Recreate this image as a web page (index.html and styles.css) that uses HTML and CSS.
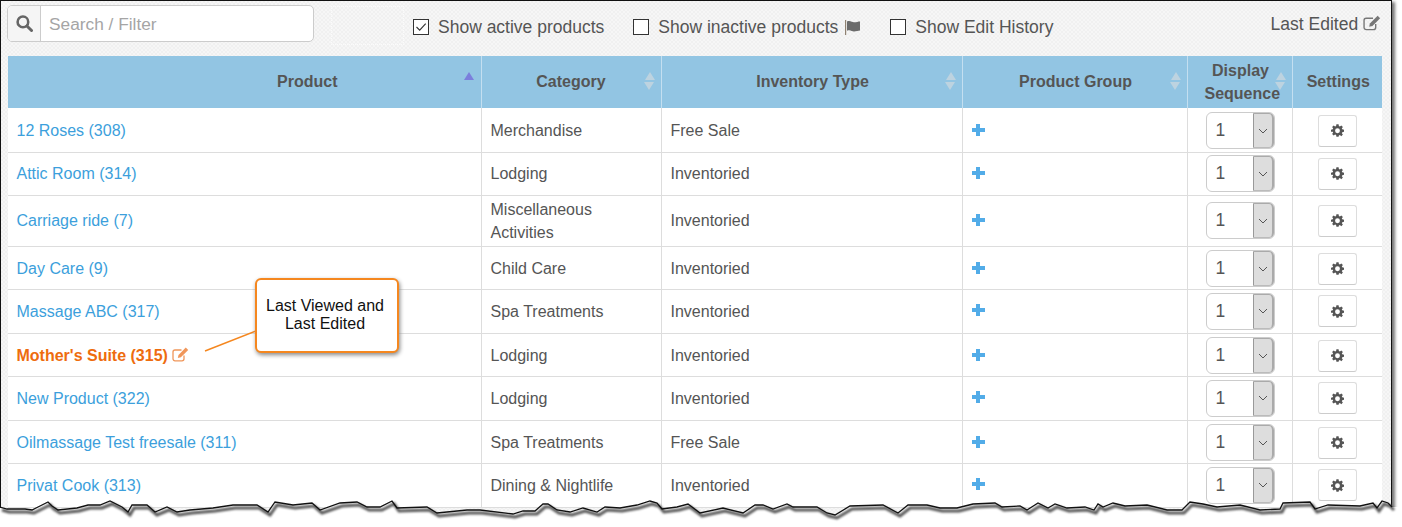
FILE: index.html
```html
<!DOCTYPE html>
<html lang="en">
<head>
	<meta charset="UTF-8">
	<title>Products</title>
	<link rel="stylesheet" href="styles.css">
</head>
<body>
<svg width="0" height="0" class="defs">
	<symbol id="gear" viewBox="0 0 24 24"><path fill-rule="evenodd" d="M10 1h4l.6 3.200 1.800.8L19.100 3.100l2.800 2.800-1.900 2.700.8 1.800L24 11v4l-3.200.6-.8 1.800 1.900 2.700-2.800 2.800-2.700-1.900-1.800.8L14 24h-4l-.6-3.200-1.800-.8-2.700 1.900-2.800-2.800 1.900-2.700-.8-1.800L0 15v-4l3.200-.6.800-1.800-1.900-2.700 2.800-2.800L7.600 5l1.800-.8zM12 8.500a4.500 4.500 0 1 0 0 9 4.500 4.500 0 0 0 0-9z" transform="translate(0 -.5)"/></symbol>
	<symbol id="edit" viewBox="0 0 17 15"><path fill="none" stroke="currentColor" stroke-width="1.300" d="M12 8.500v3.300a2 2 0 0 1-2 2H3a2 2 0 0 1-2-2V5a2 2 0 0 1 2-2h6.500"/><path fill="currentColor" d="M13.800.6l2.400 2.400-7.300 7.300-3.100.7.700-3.100z"/></symbol>
	<symbol id="chev" viewBox="0 0 10 6"><path fill="none" stroke="#555" d="M1 1l4 4 4-4"/></symbol>
</svg>
<div class="shot">
	<div class="toolbar">
		<div class="search">
			<span class="search-icon">
				<svg width="17" height="17" viewBox="0 0 16 16"><circle cx="6.500" cy="6.500" r="5" fill="none" stroke="#666" stroke-width="2.400"/><path d="M10.300 10.300l4.300 4.300" stroke="#666" stroke-width="2.800" stroke-linecap="round"/></svg>
			</span>
			<span class="search-text">Search / Filter</span>
		</div>
		<div class="ghost"></div>
		<div class="checks">
			<label class="check"><span class="box"><svg width="14" height="14" viewBox="0 0 14 14"><path d="M2.500 7l3.200 3.200 6-6.500" fill="none" stroke="#333" stroke-width="1.100"/></svg></span>Show active products</label>
			<label class="check"><span class="box"></span>Show inactive products
				<svg class="flag" width="18" height="15" viewBox="0 0 18 15"><path d="M1 0h1.200v15H1z" fill="#8f8170"/><path d="M3 1.500c3-1.500 5 .8 7 .8 2.500 0 4-.8 6-.8v9c-2 0-3.500 1-6 1-2 0-4-2.300-7-.8z" fill="#6b6b6b"/></svg>
			</label>
			<label class="check"><span class="box"></span>Show Edit History</label>
		</div>
		<div class="last-edited">Last Edited <svg class="edit-ic" width="18" height="16"><use href="#edit"/></svg></div>
	</div>

	<table class="products">
		<colgroup>
			<col class="c1"><col class="c2"><col class="c3"><col class="c4"><col class="c5"><col class="c6">
		</colgroup>
		<thead>
			<tr>
				<th class="first">Product<i class="sort sort-up"></i></th>
				<th class="second">Category<i class="sort"></i></th>
				<th>Inventory Type<i class="sort"></i></th>
				<th>Product Group<i class="sort"></i></th>
				<th class="narrow">Display Sequence<i class="sort"></i></th>
				<th>Settings</th>
			</tr>
		</thead>
		<tbody>
			<tr class="h44 nudge"><td><a href="#">12 Roses (308)</a></td><td>Merchandise</td><td>Free Sale</td><td><i class="plus"></i></td><td><span class="seq">1<span class="seq-btn"><svg width="10" height="6"><use href="#chev"/></svg></span></span></td><td><span class="gear-btn"><svg width="13" height="13"><use href="#gear"/></svg></span></td></tr>
			<tr class="h43"><td><a href="#">Attic Room (314)</a></td><td>Lodging</td><td>Inventoried</td><td><i class="plus"></i></td><td><span class="seq">1<span class="seq-btn"><svg width="10" height="6"><use href="#chev"/></svg></span></span></td><td><span class="gear-btn"><svg width="13" height="13"><use href="#gear"/></svg></span></td></tr>
			<tr class="h51"><td><a href="#">Carriage ride (7)</a></td><td>Miscellaneous Activities</td><td>Inventoried</td><td><i class="plus"></i></td><td><span class="seq">1<span class="seq-btn"><svg width="10" height="6"><use href="#chev"/></svg></span></span></td><td><span class="gear-btn"><svg width="13" height="13"><use href="#gear"/></svg></span></td></tr>
			<tr class="h43 nudge"><td><a href="#">Day Care (9)</a></td><td>Child Care</td><td>Inventoried</td><td><i class="plus"></i></td><td><span class="seq">1<span class="seq-btn"><svg width="10" height="6"><use href="#chev"/></svg></span></span></td><td><span class="gear-btn"><svg width="13" height="13"><use href="#gear"/></svg></span></td></tr>
			<tr class="h44"><td><a href="#">Massage ABC (317)</a></td><td>Spa Treatments</td><td>Inventoried</td><td><i class="plus"></i></td><td><span class="seq">1<span class="seq-btn"><svg width="10" height="6"><use href="#chev"/></svg></span></span></td><td><span class="gear-btn"><svg width="13" height="13"><use href="#gear"/></svg></span></td></tr>
			<tr class="h43 nudge"><td><a href="#" class="current">Mother's Suite (315)</a> <svg class="edit-ic current-ic" width="17" height="15"><use href="#edit"/></svg></td><td>Lodging</td><td>Inventoried</td><td><i class="plus"></i></td><td><span class="seq">1<span class="seq-btn"><svg width="10" height="6"><use href="#chev"/></svg></span></span></td><td><span class="gear-btn"><svg width="13" height="13"><use href="#gear"/></svg></span></td></tr>
			<tr class="h44"><td><a href="#">New Product (322)</a></td><td>Lodging</td><td>Inventoried</td><td><i class="plus"></i></td><td><span class="seq">1<span class="seq-btn"><svg width="10" height="6"><use href="#chev"/></svg></span></span></td><td><span class="gear-btn"><svg width="13" height="13"><use href="#gear"/></svg></span></td></tr>
			<tr class="h43 nudge"><td><a href="#">Oilmassage Test freesale (311)</a></td><td>Spa Treatments</td><td>Free Sale</td><td><i class="plus"></i></td><td><span class="seq">1<span class="seq-btn"><svg width="10" height="6"><use href="#chev"/></svg></span></span></td><td><span class="gear-btn"><svg width="13" height="13"><use href="#gear"/></svg></span></td></tr>
			<tr class="h44"><td><a href="#">Privat Cook (313)</a></td><td>Dining &amp; Nightlife</td><td>Inventoried</td><td><i class="plus"></i></td><td><span class="seq">1<span class="seq-btn"><svg width="10" height="6"><use href="#chev"/></svg></span></span></td><td><span class="gear-btn"><svg width="13" height="13"><use href="#gear"/></svg></span></td></tr>
		</tbody>
	</table>
</div>

<!-- callout -->
<svg class="leader" width="60" height="30"><path d="M1 25L52 5" stroke="#f5871f" stroke-width="1.500"/></svg>
<div class="callout">Last Viewed and<br>Last Edited</div>

<!-- torn bottom edge of the screenshot -->
<svg class="torn" width="1402" height="47" viewBox="0 480 1402 47">
	<defs>
		<path id="tear" d="M0 507L7 509 25 509 32 510 40 506 48 502 52 506 58 510 77 508 88 505 100 505 110 501 122 507 128 512 132 505 147 505 155 512 167 507 177 512 190 510 213 508 233 505 257 505 268 512 275 502 293 505 312 503 320 510 340 503 357 502 367 507 380 507 392 501 397 508 427 507 437 513 467 510 480 510 513 514 523 511 535 511 543 504 548 504 557 510 570 512 583 508 597 512 605 507 620 508 637 505 650 501 657 503 662 509 677 507 688 504 700 513 723 508 743 513 755 505 763 505 773 509 787 504 793 507 817 507 827 513 835 515 850 506 883 505 898 513 908 505 927 505 940 508 957 508 973 504 995 503 1002 507 1020 506 1027 510 1038 503 1048 508 1055 504 1067 508 1085 507 1094 510 1098 504 1103 507 1113 503 1125 506 1147 505 1167 510 1182 510 1190 502 1203 504 1217 507 1240 505 1260 510 1280 509 1283 503 1310 502 1315 509 1328 505 1360 506 1373 503 1377 508 1382 501 1388 503 1392 507"/>
	</defs>
	<path class="tear-fill" d="M-5 507L7 509 25 509 32 510 40 506 48 502 52 506 58 510 77 508 88 505 100 505 110 501 122 507 128 512 132 505 147 505 155 512 167 507 177 512 190 510 213 508 233 505 257 505 268 512 275 502 293 505 312 503 320 510 340 503 357 502 367 507 380 507 392 501 397 508 427 507 437 513 467 510 480 510 513 514 523 511 535 511 543 504 548 504 557 510 570 512 583 508 597 512 605 507 620 508 637 505 650 501 657 503 662 509 677 507 688 504 700 513 723 508 743 513 755 505 763 505 773 509 787 504 793 507 817 507 827 513 835 515 850 506 883 505 898 513 908 505 927 505 940 508 957 508 973 504 995 503 1002 507 1020 506 1027 510 1038 503 1048 508 1055 504 1067 508 1085 507 1094 510 1098 504 1103 507 1113 503 1125 506 1147 505 1167 510 1182 510 1190 502 1203 504 1217 507 1240 505 1260 510 1280 509 1283 503 1310 502 1315 509 1328 505 1360 506 1373 503 1377 508 1382 501 1388 503 1392 507 1402 507V530H-5Z"/>
	<use href="#tear" class="tear-shadow"/>
	<use href="#tear" class="tear-line"/>
</svg>
</body>
</html>
```

FILE: styles.css
```css
*{
	box-sizing: border-box;
}
html,body{
	margin: 0;
	padding: 0;
	height: 100%;
	background: #fff;
	overflow: hidden;
}
body{
	position: relative;
	font-family: "Liberation Sans", Arial, sans-serif;
	color: #555;
}
.defs{
	display: block;
	height: 0;
}
.shot{
	width: 1392px;
	height: 527px;
	padding-left: 7px;
	padding-right: 9px;
	border-top: 1px solid #111;
	border-left: 1px solid #111;
	border-right: 1px solid #111;
	background-color: #f3f3f3;
	background-image: repeating-conic-gradient(#f0f0f0 0 25%, #f6f6f6 0 50%);
	background-size: 4px 4px;
	box-shadow: 3px 2px 3px #777;
}

/* top bar */
.toolbar{
	display: flex;
	height: 55px;
	margin-left: -1px;
	padding-top: 4px;
	font-size: 18px;
}
.search{
	display: flex;
	width: 307px;
	height: 37px;
	background: #fff;
	border: 1px solid #ccc;
	border-radius: 5px;
	overflow: hidden;
}
.search-icon{
	display: flex;
	align-items: center;
	justify-content: center;
	width: 33px;
	background: #f5f5f5;
	border-right: 1px solid #ccc;
}
.search-text{
	padding-left: 8px;
	line-height: 36px;
	font-size: 17.300px;
	color: #a5a5a5;
}
.ghost{
	width: 73px;
	height: 39px;
	margin: 1px 0 0 17px;
	border: 1px dotted #fbfbfb;
}
.checks{
	display: flex;
	gap: 29px;
	margin-left: 9px;
	padding-top: 12px;
}
.check{
	display: flex;
	align-items: center;
	height: 20px;
	font-size: 17.500px;
}
.box{
	display: flex;
	align-items: center;
	justify-content: center;
	width: 16px;
	height: 16px;
	margin-right: 9px;
	background: #fff;
	border: 1px solid #333;
}
.flag{
	margin: 0 -1px 0 6px;
}
.last-edited{
	margin-left: auto;
	padding-top: 9px;
	padding-right: 1px;
	font-size: 17.500px;
	line-height: 20px;
}
.edit-ic{
	color: #777;
	vertical-align: -1px;
}

/* table */
.products{
	width: 1374px;
	border-collapse: collapse;
	table-layout: fixed;
	font-size: 16px;
	background: #fff;
}
.c1{ width: 473px; }
.c2{ width: 180px; }
.c3{ width: 301px; }
.c4{ width: 225px; }
.c5{ width: 105px; }
.c6{ width: 90px; }
.products th{
	position: relative;
	height: 52px;
	padding: 0 9px 2px 11px;
	background: #92c5e3;
	border-left: 1px solid #c4dff0;
	line-height: 23px;
	font-size: 16px;
	font-weight: bold;
	color: #555;
}
.products th.first{
	padding-left: 136px;
	padding-right: 10px;
	border-left: 0;
}
.products th.second{
	padding-left: 10px;
	padding-right: 10px;
}
.products th.narrow{
	padding: 0 15px 0 17px;
}
.sort{
	position: absolute;
	top: 16px;
	right: 6px;
	width: 0;
	height: 0;
	border: 5.500px solid transparent;
	border-top: 0;
	border-bottom: 8px solid #bdd3e0;
}
.sort:after{
	content: "";
	position: absolute;
	top: 10px;
	left: -5.500px;
	border: 5.500px solid transparent;
	border-bottom: 0;
	border-top: 8px solid #bdd3e0;
}
.sort-up{
	right: 7px;
	border-bottom-color: #7b7fdc;
}
.sort-up:after{
	display: none;
}
.products td{
	padding: 0 9px;
	border: 1px solid #ddd;
	border-top: 0;
	line-height: 23px;
	color: #555;
}
.products td:first-child{
	padding-left: 8.500px;
	border-left: 0;
}
.products td:last-child{
	border-right: 0;
	text-align: center;
}
.h43{ height: 43px; }
.h44{ height: 44px; }
.h51{ height: 51px; }
.products .nudge td{
	padding-top: 2px;
}
.products a{
	color: #3c9fdc;
	text-decoration: none;
}
.products a.current{
	color: #ee6c0e;
	font-weight: bold;
}
.current-ic{
	color: #f0965a;
}
.plus{
	display: block;
	width: 13px;
	height: 12px;
	margin-top: -2px;
	background:
		linear-gradient(#52ace8, #52ace8) 50% 50% / 4px 12px no-repeat,
		linear-gradient(#52ace8, #52ace8) 50% 50% / 13px 4px no-repeat;
}
.seq{
	display: block;
	position: relative;
	width: 69px;
	height: 37px;
	margin-left: 9px;
	padding-left: 9px;
	border: 1px solid #ccc;
	border-radius: 6px;
	line-height: 35px;
	font-size: 17.500px;
	background: #fff;
}
.seq-btn{
	position: absolute;
	top: 0;
	right: 0;
	bottom: 0;
	display: flex;
	align-items: center;
	justify-content: center;
	width: 21px;
	background: #ddd;
	border: 1px solid #aaa;
	border-left-color: #999;
	border-right-width: 2px;
	border-bottom-color: #bbb;
	border-radius: 0 5px 5px 0;
}
.gear-btn{
	display: inline-flex;
	align-items: center;
	justify-content: center;
	width: 39px;
	height: 32px;
	background: #fff;
	border: 1px solid #ddd;
	border-bottom-color: #ccc;
	border-radius: 3px;
	vertical-align: middle;
}
.gear-btn svg{
	fill: #555;
}

/* annotations */
.callout{
	position: absolute;
	left: 255px;
	top: 278px;
	width: 144px;
	height: 75px;
	padding: 17px 4px 0 0;
	background: #fff;
	border: 2px solid #f5871f;
	border-radius: 6px;
	box-shadow: 1px 2px 4px #888;
	text-align: center;
	font-size: 16px;
	line-height: 18px;
	color: #111;
}
.leader{
	position: absolute;
	left: 204px;
	top: 326px;
}
.torn{
	position: absolute;
	left: 0;
	bottom: 0;
	overflow: visible;
}
.tear-fill{
	fill: #fff;
}
.tear-shadow{
	fill: none;
	stroke: #555;
	stroke-width: 3px;
	transform: translate(2px, 3px);
	filter: blur(1px);
}
.tear-line{
	fill: none;
	stroke: #111;
	stroke-width: 1.300px;
}
```
